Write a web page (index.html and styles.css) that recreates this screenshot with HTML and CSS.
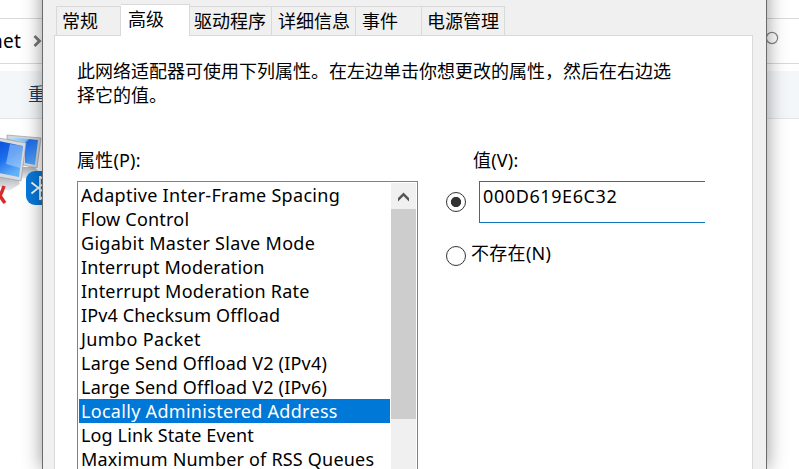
FILE: index.html
```html
<!DOCTYPE html>
<html lang="zh-CN">
<head>
<meta charset="utf-8">
<title>网络适配器属性</title>
<link rel="stylesheet" href="styles.css">
</head>
<body>
<div class="explorer">
  <div class="topbar"></div>
  <div class="address"><span class="crumb">net</span>
    <svg class="chevron" width="9" height="12" viewBox="0 0 9 12"><path d="M1.500 1L6.500 6L1.500 11" fill="none" stroke="#777" stroke-width="2.800"/></svg>
    <svg class="search" width="14" height="14" viewBox="0 0 14 14"><circle cx="7" cy="7" r="5.600" fill="none" stroke="#858585" stroke-width="1.200"/></svg>
  </div>
  <div class="gap"></div>
  <div class="toolbar">重</div>
  <div class="files">
    <svg width="43" height="90" viewBox="0 0 43 90">
      <defs>
        <linearGradient id="scr" x1="0" y1="0" x2="1" y2="1"><stop offset="0" stop-color="#bfe2fc"/><stop offset=".35" stop-color="#7dbcf8"/><stop offset=".4" stop-color="#1c67e8"/><stop offset="1" stop-color="#5cb0f6"/></linearGradient>
        <linearGradient id="scr2" x1="0" y1="0" x2=".4" y2="1"><stop offset="0" stop-color="#0c50dc"/><stop offset=".5" stop-color="#1d6fec"/><stop offset="1" stop-color="#62b2f8"/></linearGradient>
        <linearGradient id="base" x1="0" y1="0" x2="0" y2="1"><stop offset="0" stop-color="#a9adb3"/><stop offset="1" stop-color="#eceef0"/></linearGradient>
      </defs>
      <path d="M20 48L34 48L41 54L30 59L16 60Z" fill="url(#base)"/>
      <path d="M7 16L41 19L37 49L23 46V24L7 20Z" fill="#d3d6da" stroke="#999fa6" stroke-width=".7"/>
      <path d="M10 18L38 21L35 46L25 44V23L10 20Z" fill="url(#scr)"/>
      <path d="M0 56L18 60L20 65L9 72L0 68Z" fill="url(#base)"/>
      <path d="M-1 19L26 24L21 62L-1 58Z" fill="#d8dbdf" stroke="#979da5" stroke-width=".7"/>
      <path d="M-1 22L23 27L19 58L-1 54Z" fill="url(#scr2)"/>
      <path d="M10 25L23 27L20 49L6 45Z" fill="#b9dcfb" opacity=".5"/>
      <path d="M-5 84Q1 77 4 67M-4 68Q0 78 5 84" stroke="#d92a2a" stroke-width="3.500" fill="none"/>
      <rect x="26" y="52" width="28" height="34" rx="9" fill="#0878d8"/>
      <path d="M31.500 63.500L46 75M31.500 74.500L46 62.500M40 57V81M40 57.500L46 62.500M40 80.500L46 75" stroke="#fff" stroke-width="1.700" fill="none"/>
    </svg>
  </div>
</div>
<div class="dialog">
  <div class="tabs">
    <div class="tab t1">常规</div><div class="tab t2 active">高级</div><div class="tab t3">驱动程序</div><div class="tab t4">详细信息</div><div class="tab t5">事件</div><div class="tab t6">电源管理</div>
  </div>
  <div class="panel">
    <p class="intro">此网络适配器可使用下列属性。在左边单击你想更改的属性，然后在右边选<br>择它的值。</p>
    <div class="columns">
      <div class="props">
        <div class="label">属性(P):</div>
        <div class="listbox">
          <ul class="items">
            <li class="s3">Adaptive Inter-Frame Spacing</li>
            <li class="s2">Flow Control</li>
            <li class="s3">Gigabit Master Slave Mode</li>
            <li class="s1">Interrupt Moderation</li>
            <li class="s2">Interrupt Moderation Rate</li>
            <li class="s1">IPv4 Checksum Offload</li>
            <li class="s4">Jumbo Packet</li>
            <li class="s2">Large Send Offload V2 (IPv4)</li>
            <li class="s2">Large Send Offload V2 (IPv6)</li>
            <li class="s3 selected">Locally Administered Address</li>
            <li class="s1">Log Link State Event</li>
            <li class="s2">Maximum Number of RSS Queues</li>
          </ul>
          <div class="scrollbar">
            <svg width="25" height="26" viewBox="0 0 25 26"><path d="M7 18.500V15L12.500 9.500L18 15V18.500L12.500 13Z" fill="#555"/></svg>
            <div class="thumb"></div>
          </div>
        </div>
      </div>
      <div class="values">
        <div class="label value-label">值(V):</div>
        <div class="row first"><i class="radio on"></i><div class="input">000D619E6C32</div></div>
        <div class="row second"><i class="radio"></i><span class="none">不存在(N)</span></div>
      </div>
    </div>
  </div>
</div>
</body>
</html>
```
FILE: styles.css
```css
* { box-sizing: border-box; }
html { height: 469px; overflow: hidden; }
body { margin: 0; width: 799px; height: 469px; overflow: hidden; position: relative; background: #fff; color: #000; font: 18px/24px "Noto Sans", "Noto Sans CJK SC", sans-serif; }
svg { display: block; flex: none; }
.explorer { display: flex; flex-direction: column; height: 469px; }
.topbar { height: 19px; border-bottom: 1px solid #d9d9d9; }
.address { height: 45px; display: flex; align-items: center; border-bottom: 1px solid #d9d9d9; position: relative; }
.crumb { width: 32px; margin-left: -9px; font-size: 19px; letter-spacing: .3px; }
.chevron { margin-left: 10px; }
.search { position: absolute; left: 765px; top: 12px; }
.gap { height: 7px; }
.toolbar { height: 48px; padding: 11px 0 0 28px; background: #f4f7f9; border-bottom: 1px solid #e3e5e7; color: #1e395b; }
.dialog { position: absolute; left: 42px; top: -20px; width: 725px; height: 489px; padding: 24px 0 0 11px; background: #f0f0f0; border: 1px solid #6b6b6b; border-bottom: 0; box-shadow: 0 0 18px rgba(0,0,0,.42); overflow: hidden; }
.tabs { display: flex; align-items: flex-end; height: 31px; padding-left: 2px; }
.tab { height: 30px; border: 1px solid #d9d9d9; border-left: 0; padding: 2px 0 0 5px; white-space: nowrap; }
.t1 { width: 65px; border-left: 1px solid #d9d9d9; }
.t2 { width: 69px; padding-left: 7px; }
.t3 { width: 82px; padding-left: 4px; }
.t4 { width: 84px; padding-left: 6px; }
.t5 { width: 66px; padding-left: 6px; }
.t6 { width: 83px; padding-left: 5px; }
.tab.active { height: 32px; background: #fff; border-bottom: 0; position: relative; z-index: 1; }
.panel { width: 699px; height: 434px; margin-top: -1px; background: #fff; border: 1px solid #d9d9d9; border-bottom: 0; padding: 23px 0 0 22px; overflow: hidden; }
.intro { margin: 0; height: 89px; white-space: nowrap; }
.columns { display: flex; }
.props { width: 341px; }
.label { height: 33px; letter-spacing: .2px; }
.listbox { display: flex; width: 341px; height: 288px; border: 1px solid #828282; border-bottom: 0; padding: 1px 1px 0 1px; overflow: hidden; }
.items { list-style: none; margin: 0 1px 0 0; padding: 0; width: 311px; }
.items li { height: 24px; padding-left: 2px; white-space: nowrap; }
.items .s1 { letter-spacing: .13px; }
.items .s2 { letter-spacing: .2px; }
.items .s3 { letter-spacing: .3px; }
.items .s4 { letter-spacing: .37px; }
.items .selected { background: #0078d7; color: #fff; }
.scrollbar { width: 25px; background: #f0f0f0; }
.thumb { height: 210px; background: #cdcdcd; }
.values { width: 260px; margin-left: 28px; }
.value-label { padding-left: 27px; }
.row { display: flex; }
.radio { width: 20px; height: 20px; border: 1px solid #333; border-radius: 50%; flex: none; }
.radio.on { margin-top: 11px; background: radial-gradient(circle, #333 0 4.800px, #fff 5.400px); }
.input { width: 226px; height: 42px; margin-left: 13px; padding: 2px 0 0 3px; border: 1px solid #1177bb; border-right: 0; letter-spacing: .6px; }
.second { margin-top: 18px; }
.second .radio { margin-top: 5px; }
.none { margin-left: 5px; letter-spacing: .3px; }
```
